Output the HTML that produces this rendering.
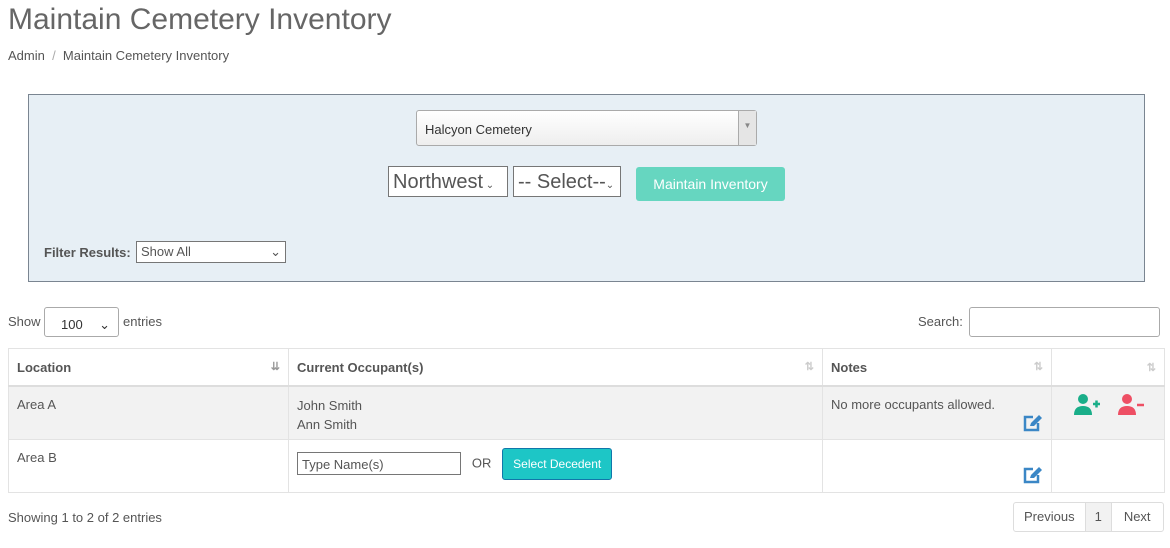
<!DOCTYPE html>
<html><head><style>
body{margin:0;width:1170px;height:548px;background:#fff;font-family:"Liberation Sans",sans-serif;color:#555;font-size:13px;position:relative;overflow:hidden}
.a{position:absolute}
h1{position:absolute;left:8px;top:3px;margin:0;font-weight:300;font-size:30px;color:#666}
table{border-collapse:collapse;position:absolute;left:8px;top:348px;width:1157px;table-layout:fixed}
td,th{border:1px solid #e3e3e3;text-align:left;vertical-align:top;padding:0 8px;font-size:13px}
th{height:36px;vertical-align:middle;font-weight:bold;border-bottom:2px solid #ddd}
.s{float:right;color:#ccc;font-size:11px}
</style></head><body>
<h1>Maintain Cemetery Inventory</h1>
<div class="a" style="left:8px;top:48px">Admin &nbsp;<span style="color:#aaa">/</span>&nbsp; Maintain Cemetery Inventory</div>
<div class="a" style="left:28px;top:94px;width:1115px;height:186px;background:#e7eff5;border:1px solid #7a8591"></div>
<div class="a" style="left:416px;top:110px;width:341px;height:36px;border:1px solid #aaa;border-radius:3px;background:linear-gradient(#fff,#eee);box-sizing:border-box">
<span class="a" style="left:8px;top:11px;color:#333">Halcyon Cemetery</span>
<span class="a" style="right:0;top:0;width:17px;height:34px;border-left:1px solid #aaa;background:#e5e5e5;color:#888;font-size:8px;text-align:center;line-height:30px">▼</span></div>
<div class="a" style="left:388px;top:166px;width:120px;height:31px;border:1px solid #767676;background:#fff;font-size:20px;color:#555;line-height:30px;padding-left:4px;box-sizing:border-box">Northwest<span style="font-size:10px"> ⌄</span></div>
<div class="a" style="left:513px;top:166px;width:108px;height:31px;border:1px solid #767676;background:#fff;font-size:20px;color:#555;line-height:30px;padding-left:4px;box-sizing:border-box">-- Select--<span style="font-size:10px">⌄</span></div>
<div class="a" style="left:636px;top:167px;width:149px;height:34px;background:#66d6c0;border-radius:3px;color:#fff;font-size:14px;line-height:34px;text-align:center">Maintain Inventory</div>
<div class="a" style="left:44px;top:245px;font-weight:bold">Filter Results:</div>
<div class="a" style="left:136px;top:241px;width:150px;height:22px;border:1px solid #767676;background:#fff;box-sizing:border-box;padding:2px 4px">Show All<span style="float:right">⌄</span></div>
<div class="a" style="left:8px;top:314px">Show</div>
<div class="a" style="left:44px;top:307px;width:75px;height:30px;border:1px solid #aaa;border-radius:3px;box-sizing:border-box;padding:9px 16px;color:#333">100<span style="float:right;margin-right:-8px">⌄</span></div>
<div class="a" style="left:123px;top:314px">entries</div>
<div class="a" style="left:918px;top:314px">Search:</div>
<div class="a" style="left:969px;top:307px;width:191px;height:30px;border:1px solid #aaa;border-radius:3px;box-sizing:border-box"></div>
<table>
<colgroup><col style="width:280px"><col style="width:534px"><col style="width:229px"><col></colgroup>
<tr><th>Location<span class="s" style="color:#999">⇊</span></th><th>Current Occupant(s)<span class="s">⇅</span></th><th>Notes<span class="s">⇅</span></th><th><span class="s">⇅</span></th></tr>
<tr style="background:#f2f2f2;height:53px"><td style="padding-top:10px">Area A</td><td style="padding-top:9px;line-height:19px">John Smith<br>Ann Smith</td><td style="padding-top:10px;position:relative">No more occupants allowed.
<svg class="a" style="right:8px;top:27px" width="20" height="18" viewBox="0 0 20 18"><path d="M10 3H2v13h13V9" fill="none" stroke="#3b87c6" stroke-width="2.5"/><path d="M7 12l1-3 8-8 3 3-8 8z" fill="#3b87c6"/></svg></td>
<td style="position:relative">
<svg class="a" style="left:22px;top:7px" width="28" height="22" viewBox="0 0 28 22"><circle cx="9" cy="5" r="5" fill="#1aae89"/><path d="M0 21c0-6 3-9 9-9s9 3 9 9z" fill="#1aae89"/><path d="M19 10h7M22.5 6.5v7" stroke="#1aae89" stroke-width="2.5"/></svg>
<svg class="a" style="left:66px;top:7px" width="28" height="22" viewBox="0 0 28 22"><circle cx="9" cy="5" r="5" fill="#ee4f64"/><path d="M0 21c0-6 3-9 9-9s9 3 9 9z" fill="#ee4f64"/><path d="M19 11h7" stroke="#ee4f64" stroke-width="2.5"/></svg></td></tr>
<tr style="height:53px"><td style="padding-top:10px">Area B</td><td style="padding-top:8px"><span style="display:inline-block;width:164px;height:23px;border:1px solid #767676;box-sizing:border-box;padding:4px;vertical-align:middle">Type Name(s)</span> &nbsp; OR &nbsp; <span style="display:inline-block;background:#1dc6c6;color:#fff;padding:8px 10px;border-radius:3px;border:1px solid #17a;vertical-align:middle;font-size:12px">Select Decedent</span></td><td style="position:relative">
<svg class="a" style="right:8px;top:26px" width="20" height="18" viewBox="0 0 20 18"><path d="M10 3H2v13h13V9" fill="none" stroke="#3b87c6" stroke-width="2.5"/><path d="M7 12l1-3 8-8 3 3-8 8z" fill="#3b87c6"/></svg></td><td></td></tr>
</table>
<div class="a" style="left:8px;top:510px">Showing 1 to 2 of 2 entries</div>
<div class="a" style="left:1013px;top:502px;height:28px;border:1px solid #ddd;border-radius:3px;display:flex;line-height:28px">
<span style="padding:0 10px">Previous</span><span style="padding:0 9px;background:#f2f2f2;border-left:1px solid #ddd;border-right:1px solid #ddd">1</span><span style="padding:0 12px">Next</span></div>
</body></html>
